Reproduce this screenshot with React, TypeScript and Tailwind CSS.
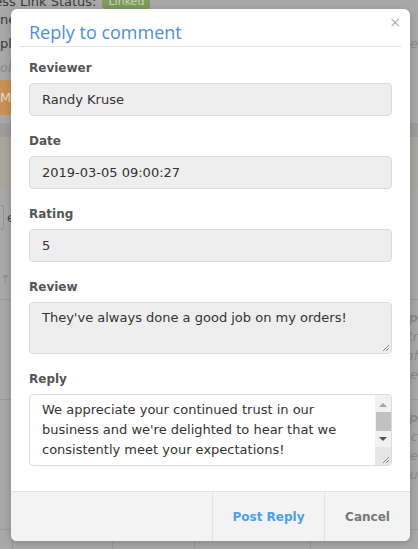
import type { ReactNode } from 'react';

const font = "font-['DejaVu_Sans',sans-serif]";

function Backdrop() {
  return (
    <div className="text-[13px] text-[#3a3a3a]">
      <div className="h-[9px] overflow-hidden">
        <div className="-mt-[8px] flex items-center gap-[6px] pl-0">
          <span className="-ml-[14px]">ness Link Status:</span>
          <span className="rounded-[3px] bg-[#7d9b5f] px-[6px] text-[11px] leading-[14px] text-[#c8d4bd]">Linked</span>
        </div>
      </div>
      <div className="flex h-[22px] items-center">
        <span>ne</span>
      </div>
      <div className="flex h-[26px] items-center justify-between">
        <span>ply</span>
        <span className="italic text-[#8a8a8a]">ie</span>
      </div>
      <div className="flex h-[22px] items-center">
        <span className="italic text-[#8a8a8a]">oli</span>
      </div>
      <div className="mt-[1px] flex h-[35px] w-[70px] items-center bg-[#c89155] text-[#eadccb]">My</div>
      <div className="h-[8px]" />
      <div className="h-[14px] bg-[#9c9c9c]" />
      <div className="h-[53px] bg-[#a9a69e]" />
      <div className="flex h-[80px] items-start pt-[15px]">
        <div className="h-[25px] w-[4px] rounded-r-[3px] border border-l-0 border-[#939393]" />
        <span className="ml-[3px] mt-[3px] text-[#4a4a4a]">e</span>
      </div>
      <div className="flex h-[30px] justify-between border-b border-[#9a9a9a]">
        <span className="text-[#8e8e8e]">↑</span>
      </div>
      <div className="flex h-[100px] flex-col items-end border-b border-[#9a9a9a] pt-[8px] text-[13px] italic leading-[19px] text-[#8a8a8a]">
        <span className="font-bold">sp</span>
        <span>tr</span>
        <span>nf</span>
        <span>e</span>
      </div>
      <div className="flex h-[130px] flex-col items-end border-b border-[#9a9a9a] pt-[8px] text-[13px] italic leading-[19px] text-[#8a8a8a]">
        <span className="font-bold">sp</span>
        <span>ec</span>
        <span>ie</span>
        <span>ou</span>
      </div>
      <div className="flex h-[60px]">
        <div className="w-[13px] border-r border-[#999]" />
        <div className="w-[100px] border-r border-[#999]" />
        <div className="w-[82px] border-r border-[#999]" />
        <div className="w-[116px] border-r border-[#999]" />
      </div>
    </div>
  );
}

function Grip() {
  return (
    <svg width="7" height="7" viewBox="0 0 7 7" className="absolute bottom-[2px] right-[2px]">
      <path d="M1 7 L7 1 M4 7 L7 4" stroke="#8a8a8a" strokeWidth="1" />
    </svg>
  );
}

function Field({ label, children, last }: { label: string; children: ReactNode; last?: boolean }) {
  return (
    <div className={last ? '' : 'mb-[16px]'}>
      <div className="h-[18px] text-[12px] font-bold leading-[18px] text-[#555]">{label}</div>
      <div className="mt-[6px]">{children}</div>
    </div>
  );
}

function ReadBox({ value }: { value: string }) {
  return (
    <div className="flex h-[33px] items-center rounded-[4px] border border-[#dcdcdc] bg-[#eeeeee] px-[12px] text-[13px] text-[#333]">
      {value}
    </div>
  );
}

function Modal() {
  return (
    <div className={`absolute left-[11px] top-[9px] flex h-[532px] w-[399px] flex-col overflow-hidden rounded-[6px] bg-white shadow-[0_2px_8px_rgba(0,0,0,0.2)] ${font}`}>
      <div className="relative mx-[8px] h-[38px] border-b border-[#e6e6e6] pl-[10px] pt-[11px]">
        <h2 className="font-['Open_Sans',sans-serif] text-[18px] leading-[24px] text-[#4a90d9]">Reply to comment</h2>
        <span className="absolute right-[1px] top-[5px] text-[14px] leading-[16px] text-[#b0b0b0]">×</span>
      </div>

      <div className="flex-1 px-[18px] pt-[12px]">
        <Field label="Reviewer">
          <ReadBox value="Randy Kruse" />
        </Field>
        <Field label="Date">
          <ReadBox value="2019-03-05 09:00:27" />
        </Field>
        <Field label="Rating">
          <ReadBox value="5" />
        </Field>
        <Field label="Review">
          <div className="relative h-[52px] rounded-[4px] border border-[#dcdcdc] bg-[#eeeeee] px-[12px] py-[5px] text-[13px] leading-[20px] text-[#333]">
            They've always done a good job on my orders!
            <Grip />
          </div>
        </Field>
        <Field label="Reply" last>
          <div className="relative h-[72px] overflow-hidden rounded-[4px] border border-[#dcdcdc] bg-white py-[5px] pl-[12px] pr-[20px] text-[13px] leading-[20px] text-[#333]">
            <div className="whitespace-nowrap">We appreciate your continued trust in our</div>
            <div className="whitespace-nowrap">business and we're delighted to hear that we</div>
            <div className="whitespace-nowrap">consistently meet your expectations!</div>
            <div className="absolute bottom-0 right-0 top-0 flex w-[16px] flex-col items-center bg-[#f1f1f1]">
              <svg width="8" height="5" viewBox="0 0 8 5" className="mt-[7px]">
                <path d="M0 5 L4 1 L8 5 Z" fill="#a3a3a3" />
              </svg>
              <div className="mt-[5px] h-[19px] w-[15px] bg-[#c1c1c1]" />
              <svg width="8" height="5" viewBox="0 0 8 5" className="mt-[6px]">
                <path d="M0 0 L8 0 L4 4 Z" fill="#505050" />
              </svg>
              <div className="mt-[5px] flex-1 self-stretch bg-[#e6e6e6]" />
            </div>
            <Grip />
          </div>
        </Field>
      </div>

      <div className="flex h-[50px] border-t border-[#e2e2e2] bg-[#f3f3f3]">
        <div className="flex-1" />
        <button className="w-[112px] border-l border-[#e2e2e2] text-[12px] font-bold text-[#4a9ff5]">Post Reply</button>
        <button className="w-[86px] border-l border-[#e2e2e2] text-[12px] font-bold text-[#777]">Cancel</button>
      </div>
    </div>
  );
}

export default function App() {
  return (
    <div className={`relative h-[549px] w-[418px] overflow-hidden bg-[#a8a8a8] ${font}`}>
      <Backdrop />
      <Modal />
    </div>
  );
}
